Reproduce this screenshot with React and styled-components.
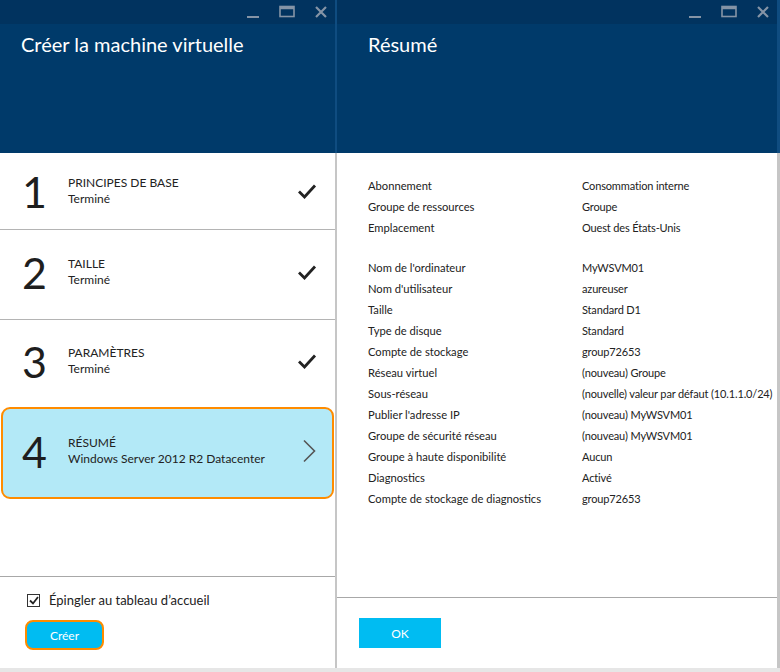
import React from 'react';
import styled, { createGlobalStyle } from 'styled-components';

const GlobalStyle = createGlobalStyle`
  html, body { margin: 0; padding: 0; }
  body { font-family: "Segoe UI", Lato, "Noto Sans", sans-serif; background: #e6e6e6; }
`;

const Page = styled.div`
  width: 780px;
  height: 672px;
  display: flex;
  gap: 2px;
  padding: 0 3px 4px 0;
  box-sizing: border-box;
  background: linear-gradient(to bottom, #0f4c80 0, #0f4c80 153px, #c6c6c6 153px, #c6c6c6 668px, #e6e6e6 668px);
`;

const Blade = styled.section`
  width: ${p => p.$width}px;
  height: 668px;
  background: #fff;
  display: flex;
  flex-direction: column;
`;

const Header = styled.header`
  height: 153px;
  background: #003a6a;
  color: #fff;
  flex-shrink: 0;
`;

const TopBar = styled.div`
  height: 24px;
  background: #01335f;
  display: flex;
  justify-content: flex-end;
  align-items: center;
  gap: 18px;
  padding-right: 6px;
`;

const Title = styled.h1`
  margin: 0;
  padding: ${p => (p.$left ? `8px 0 0 ${p.$left}px` : '8px 0 0 21px')};
  font-size: 20px;
  font-weight: 400;
`;

const Steps = styled.ul`
  list-style: none;
  margin: 0;
  padding: 0;
  flex: 1;
`;

const Step = styled.li`
  height: ${p => p.$h}px;
  box-sizing: border-box;
  display: flex;
  align-items: center;
  padding: 0 18px ${p => p.$pb || 0}px 22px;
  border-bottom: ${p => (p.$last ? 'none' : '1px solid #b4b4b4')};
  color: #222;
`;

const ActiveStep = styled(Step)`
  height: 92px;
  margin: 0 1px;
  border: 2px solid #ff8c00;
  border-radius: 9px;
  background: #b3e9f7;
  padding: 0 16px 4px 19px;
`;

const Num = styled.span`
  width: 46px;
  font-size: 43px;
  font-weight: 400;
  line-height: 1;
  color: #1e1e1e;
`;

const StepText = styled.div`
  flex: 1;
  display: flex;
  flex-direction: column;
  font-size: 12px;
  line-height: 16px;
`;

const StepTitle = styled.span`
  text-transform: uppercase;
`;

const Footer = styled.footer`
  border-top: 1px solid #a8a8a8;
  height: ${p => p.$h}px;
  flex-shrink: 0;
  box-sizing: border-box;
  padding: ${p => p.$pad};
  display: flex;
  flex-direction: column;
  align-items: flex-start;
`;

const CheckRow = styled.label`
  display: flex;
  align-items: center;
  gap: 9px;
  font-size: 13px;
  color: #222;
`;

const Box = styled.span`
  width: 11px;
  height: 11px;
  border: 1px solid #333;
  display: flex;
  align-items: center;
  justify-content: center;
`;

const Button = styled.button`
  margin-top: ${p => p.$mt}px;
  margin-left: ${p => (p.$focus ? -2 : 0)}px;
  width: ${p => p.$w}px;
  height: 30px;
  border: ${p => (p.$focus ? '2px solid #ff8c00' : 'none')};
  border-radius: ${p => (p.$focus ? '8px' : '0')};
  background: #00bcf2;
  color: #fff;
  font-family: inherit;
  font-size: 12px;
  padding: 0;
`;

const Body = styled.div`
  flex: 1;
  padding: 22px 0 0 31px;
`;

const Grid = styled.dl`
  margin: 0;
  display: grid;
  grid-template-columns: 214px 1fr;
  align-items: center;
  color: #222;
  dt, dd { margin: 0; white-space: nowrap; line-height: 21px; }
  dt { font-size: 11.2px; }
  dd { font-size: 11px; letter-spacing: -0.15px; }
`;

const Gap = styled.div`
  grid-column: 1 / 3;
  height: 19px;
`;

const Ctrl = ({ children }) => (
  <svg width="16" height="14" viewBox="0 0 16 14" fill="none" stroke="#8594a6" strokeWidth="2">
    {children}
  </svg>
);

const Controls = () => (
  <TopBar>
    <Ctrl><line x1="2" y1="12" x2="14" y2="12" /></Ctrl>
    <Ctrl><rect x="1" y="1.5" width="14" height="10" strokeWidth="1.6" /><line x1="1" y1="3" x2="15" y2="3" strokeWidth="2.5" /></Ctrl>
    <Ctrl><path d="M3 2 L13 12 M13 2 L3 12" strokeWidth="2.2" /></Ctrl>
  </TopBar>
);

const Check = () => (
  <svg width="20" height="16" viewBox="0 0 20 16"><path d="M2 8.5 L7.5 14 L18 2.5" fill="none" stroke="#222" strokeWidth="2.8" /></svg>
);

const Chevron = () => (
  <svg width="14" height="24" viewBox="0 0 14 24"><path d="M2 1.5 L12.5 12 L2 22.5" fill="none" stroke="#555" strokeWidth="1.6" /></svg>
);

const steps = [
  { n: 1, t: 'Principes de base', s: 'Terminé', h: 77, pb: 0 },
  { n: 2, t: 'Taille', s: 'Terminé', h: 90, pb: 5 },
  { n: 3, t: 'Paramètres', s: 'Terminé', h: 87, pb: 5 },
];

const rows1 = [
  ['Abonnement', 'Consommation interne'],
  ['Groupe de ressources', 'Groupe'],
  ['Emplacement', 'Ouest des États-Unis'],
];
const rows2 = [
  ["Nom de l'ordinateur", 'MyWSVM01'],
  ["Nom d'utilisateur", 'azureuser'],
  ['Taille', 'Standard D1'],
  ['Type de disque', 'Standard'],
  ['Compte de stockage', 'group72653'],
  ['Réseau virtuel', '(nouveau) Groupe'],
  ['Sous-réseau', '(nouvelle) valeur par défaut (10.1.1.0/24)'],
  ["Publier l'adresse IP", '(nouveau) MyWSVM01'],
  ['Groupe de sécurité réseau', '(nouveau) MyWSVM01'],
  ['Groupe à haute disponibilité', 'Aucun'],
  ['Diagnostics', 'Activé'],
  ['Compte de stockage de diagnostics', 'group72653'],
];

export default function App() {
  return (
    <>
      <GlobalStyle />
      <Page>
        <Blade $width={335}>
          <Header>
            <Controls />
            <Title>Créer la machine virtuelle</Title>
          </Header>
          <Steps>
            {steps.map(s => (
              <Step key={s.n} $h={s.h} $pb={s.pb} $last={s.n === 3}>
                <Num>{s.n}</Num>
                <StepText>
                  <StepTitle>{s.t}</StepTitle>
                  <span>{s.s}</span>
                </StepText>
                <Check />
              </Step>
            ))}
            <ActiveStep>
              <Num>4</Num>
              <StepText>
                <StepTitle>Résumé</StepTitle>
                <span>Windows Server 2012 R2 Datacenter</span>
              </StepText>
              <Chevron />
            </ActiveStep>
          </Steps>
          <Footer $h={92} $pad="15px 0 0 27px">
            <CheckRow>
              <Box>
                <svg width="10" height="9" viewBox="0 0 10 9"><path d="M1 4.5 L4 7.5 L9 1" fill="none" stroke="#222" strokeWidth="1.8" /></svg>
              </Box>
              Épingler au tableau d’accueil
            </CheckRow>
            <Button $focus $w={79} $mt={12}>Créer</Button>
          </Footer>
        </Blade>
        <Blade $width={440}>
          <Header>
            <Controls />
            <Title $left={31}>Résumé</Title>
          </Header>
          <Body>
            <Grid>
              {rows1.map(([k, v]) => (
                <React.Fragment key={k}><dt>{k}</dt><dd>{v}</dd></React.Fragment>
              ))}
              <Gap />
              {rows2.map(([k, v]) => (
                <React.Fragment key={k}><dt>{k}</dt><dd>{v}</dd></React.Fragment>
              ))}
            </Grid>
          </Body>
          <Footer $h={71} $pad="20px 0 0 22px">
            <Button $w={82} $mt={0}>OK</Button>
          </Footer>
        </Blade>
      </Page>
    </>
  );
}
